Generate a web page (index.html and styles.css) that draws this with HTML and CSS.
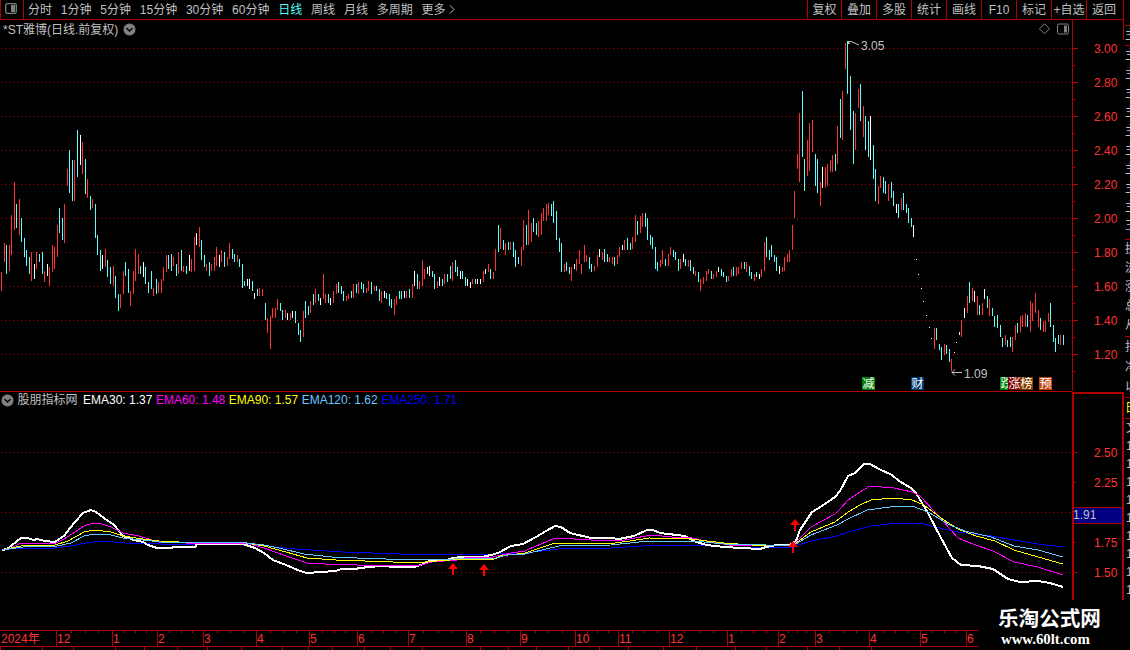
FILE: index.html
```html
<!DOCTYPE html>
<html lang="zh">
<head>
    <meta charset="UTF-8">
    <title>*ST雅博</title>
    <link rel="stylesheet" href="styles.css">
</head>
<body>
<div class="window">
    <div class="left">
        <div class="toolbar">
            <div class="tool-icon">
                <svg width="14" height="12"><rect x=".7" y=".7" width="10.600" height="9.600" rx="1.500" fill="none" stroke="#808080" stroke-width="1.300"/><rect x="6" y="2" width="4" height="7" fill="#808080"/></svg>
            </div>
            <div class="periods">
                <span>分时</span><span>1分钟</span><span>5分钟</span><span>15分钟</span><span>30分钟</span><span>60分钟</span><span class="active">日线</span><span>周线</span><span>月线</span><span>多周期</span><span>更多<svg class="more" width="8" height="11"><path d="M2 1.5L6 5.5L2 9.5" fill="none" stroke="#c0c0c0"/></svg></span>
            </div>
            <div class="actions">
                <span>复权</span><span>叠加</span><span>多股</span><span>统计</span><span>画线</span><span>F10</span><span>标记</span><span>+自选</span><span>返回</span>
            </div>
        </div>
        <div class="stock">
            <div class="stock-title">
                <span class="name">*ST雅博(日线.前复权)</span>
                <svg width="13" height="13"><circle cx="6.500" cy="6.500" r="6" fill="#808080"/><path d="M3.500 5L6.500 8L9.500 5" fill="none" stroke="#000" stroke-width="1.400"/></svg>
                <svg class="tools" width="30" height="12"><path d="M5.500 .8L10.500 5.800L5.500 10.800L.5 5.800Z" fill="none" stroke="#808080"/><rect x="18.500" y="1" width="11" height="10" rx="1.500" fill="none" stroke="#808080"/><rect x="25" y="2.500" width="3" height="7" fill="#808080"/></svg>
            </div>
        </div>
        <svg class="chart" id="price" width="1123" height="351" viewBox="0 40 1123 351">
            <g id="priceGrid"></g>
            <path id="up" class="red-bar"/>
            <path id="down" class="cyan-bar"/>
            <path id="flat" class="white-bar"/>
            <g class="note">
                <path d="M848 39.500h3M848.500 44v-3M848 41.500h3L859 45M848 43.500h2"/>
                <path d="M952 372.500h10M955 369.500l-3 3l3 3"/>
                <text x="861" y="50">3.05</text>
                <text x="964" y="378">1.09</text>
            </g>
            <g class="flags">
                <rect x="862" y="377" width="13" height="13" fill="#008000"/><text x="862.500" y="388">减</text>
                <rect x="911" y="377" width="13" height="13" fill="#003a70"/><text x="911.500" y="388">财</text>
                <rect x="1000" y="377" width="13" height="13" fill="#008000"/><text x="1000.500" y="388">跌</text>
                <rect x="1008" y="377" width="13" height="13" fill="#800000"/><text x="1008.500" y="388">涨</text>
                <rect x="1020" y="377" width="13" height="13" fill="#804000"/><text x="1020.500" y="388">榜</text>
                <rect x="1039" y="377" width="13" height="13" fill="#c04810"/><text x="1039.500" y="388">预</text>
            </g>
        </svg>
        <div class="indicator">
            <div class="legend">
                <svg width="13" height="13"><circle cx="6.500" cy="6.500" r="6" fill="#808080"/><path d="M3.500 5L6.500 8L9.500 5" fill="none" stroke="#000" stroke-width="1.400"/></svg>
                <span class="source">股朋指标网</span><span class="ema30">EMA30: 1.37</span><span class="ema60">EMA60: 1.48</span><span class="ema90">EMA90: 1.57</span><span class="ema120">EMA120: 1.62</span><span class="ema250">EMA250: 1.71</span>
            </div>
            <div class="legend-axis"></div>
        </div>
        <svg class="chart" id="ema" width="1124" height="192" viewBox="0 408 1124 192">
            <g id="emaGrid"></g>
            <polyline class="line250" points="2,550 21,548 55,548 71,546 86,543 102,541 125,543 161,544 246,544 264,546 296,549 343,552 400,554 496,554 525,553 559,549 611,548 642,546 690,545 728,547 792,547 811,541 837,536 848,532 871,526 897,523 920,523 935,527 958,532 991,536 1014,540 1038,544 1063,547"/>
            <polyline class="line30" points="2,550 7,549 12,545 21,538 27,538 34,540 37,539 45,541 55,542 59,539 64,536 70,528 75,522 83,513 91,510 96,512 104,518 114,525 123,536 134,540 143,542 148,545 157,548 170,548 175,547 195,547 197,544 243,544 255,548 264,553 273,560 286,565 300,571 307,573 321,572 336,571 341,569 354,569 368,567 382,566 396,567 414,567 421,565 429,561 446,560 453,558 462,557 482,557 495,554 500,552 511,546 523,544 536,537 546,531 555,526 561,527 570,533 591,538 611,538 619,539 634,536 647,530 653,530 660,533 685,536 696,542 707,545 724,547 760,549 766,547 777,545 790,545 796,541 800,530 812,512 822,506 835,497 840,491 848,476 855,473 864,464 870,464 879,469 892,475 899,481 911,488 916,493 928,513 941,538 952,558 961,565 978,566 993,569 1008,579 1020,582 1038,581 1050,583 1063,587"/>
            <polyline class="line60" points="2,550 11,548 21,543 54,544 64,539 75,532 84,526 93,523 102,524 111,527 123,533 139,536 159,542 186,543 246,543 264,548 286,556 307,563 325,564 357,565 411,565 421,565 432,562 457,560 464,558 493,557 511,553 525,551 536,546 546,542 555,538 574,539 591,540 625,540 651,535 672,537 687,537 706,541 728,545 792,546 811,527 835,514 841,508 848,500 860,492 870,486 894,488 912,492 920,496 935,512 958,538 973,544 993,551 1014,562 1038,567 1063,575"/>
            <polyline class="line90" points="2,550 21,546 55,545 68,541 84,532 95,530 111,532 123,536 143,539 159,541 179,542 241,542 264,546 286,552 307,558 336,560 393,562 425,562 450,560 495,559 500,556 525,553 546,546 555,543 589,543 615,543 630,541 649,538 690,539 724,543 751,545 792,546 811,532 835,522 848,512 860,505 871,500 894,498 912,500 924,505 941,518 958,529 976,536 995,541 1014,550 1038,557 1063,564"/>
            <polyline class="line120" points="2,550 23,547 57,546 71,543 84,536 95,534 107,534 123,538 143,540 161,542 214,542 246,543 264,545 279,548 304,554 332,557 357,558 386,559 411,560 454,559 496,558 507,555 525,554 546,549 559,546 611,545 649,541 694,541 724,544 766,545 794,545 811,535 837,525 848,519 867,510 890,507 912,506 928,512 950,525 965,531 991,537 1014,546 1038,550 1063,557"/>
            <g class="signals">
                <path d="M453 563l5 6h-4v6h-2v-6h-4z"/>
                <path d="M484 564l5 6h-4v6h-2v-6h-4z"/>
                <path d="M795 519l5 6h-4v6h-2v-6h-4z"/>
                <path d="M793 541l5 6h-4v6h-2v-6h-4z"/>
            </g>
            <rect class="tag" x="1073.500" y="507.500" width="49" height="16"/>
            <text class="tag-text" x="1073" y="519">1.91</text>
        </svg>
        <div class="bottom">
            <div class="dates">
                <div class="months" id="months"></div>
                <div class="next-row" id="nextRow"></div>
            </div>
            <div class="watermark">
                <div class="site">乐淘公式网</div>
                <div class="url">www.60lt.com</div>
            </div>
        </div>
    </div>
    <div class="side">
        <div class="side-head">主</div>
        <div class="side-names">主<br>主<br>主<br>主<br>主<br>主<br>主<br>主<br>主<br>玉</div>
        <div class="side-data">换<br>流<br>涨<br>总<br>从</div>
        <div class="side-more">扣<br>净<br>以</div>
        <div class="side-tab">日</div>
        <div class="side-time">文<br>1<br>1<br>1<br>1<br>1<br>1<br>1<br>1<br>1</div>
    </div>
</div>
<script src="chart.js"></script>
</body>
</html>
```
FILE: styles.css
```css
*{
    margin: 0;
    padding: 0;
    box-sizing: border-box;
}
body{
    width: 1130px;
    height: 650px;
    overflow: hidden;
    background: #000;
    color: #c0c0c0;
    font: 12px/18px "Liberation Sans", "Noto Sans CJK SC", sans-serif;
}
.window{
    display: flex;
    width: 1130px;
    height: 650px;
}
.left{
    width: 1124px;
    flex: none;
}
svg{
    display: block;
}
.toolbar{
    display: flex;
    height: 20px;
    border-bottom: 1px solid #b00000;
    line-height: 20px;
    white-space: nowrap;
}
.tool-icon{
    width: 24px;
    height: 20px;
    padding: 3px 0 0 4px;
    border-left: 1px solid #b00000;
    border-right: 1px solid #b00000;
}
.periods{
    display: flex;
    gap: 8.8px;
    padding-left: 4px;
}
.periods span{
    display: flex;
}
.periods .active{
    color: #54ffff;
}
.more{
    margin-top: 4px;
    margin-left: 2px;
}
.actions{
    display: flex;
    margin-left: auto;
}
.actions span{
    width: 35px;
    height: 19px;
    border-left: 1px solid #b00000;
    text-align: center;
}
.actions span:first-child{
    width: 34px;
}
.actions span:last-child{
    width: 38px;
    padding-right: 2px;
    border-right: 1px solid #b00000;
}
.stock{
    height: 20px;
    border-right: 1px solid #b00000;
}
.stock-title{
    display: flex;
    align-items: center;
    width: 1073px;
    height: 20px;
    padding: 0 3px 2px;
    border-right: 1px solid #b00000;
}
.name{
    width: 120px;
    padding-top: 1px;
    white-space: nowrap;
}
.tools{
    margin-left: auto;
}
.chart text{
    font-size: 12px;
}
.grid-line{
    stroke: #b00000;
    stroke-dasharray: 1 3;
}
.axis{
    stroke: #b00000;
    fill: none;
}
.axis-thick{
    stroke: #b00000;
    stroke-width: 2;
    fill: none;
}
.scale{
    fill: #ff3232;
}
.red-bar{
    stroke: #ff3232;
}
.cyan-bar{
    stroke: #54ffff;
}
.white-bar{
    stroke: #fff;
}
.note path{
    fill: none;
    stroke: #c0c0c0;
}
.note text{
    fill: #c0c0c0;
}
.flags text{
    fill: #fff;
}
.indicator{
    display: flex;
    height: 17px;
}
.legend{
    display: flex;
    align-items: center;
    gap: 3.5px;
    width: 1072px;
    padding-left: 1px;
    border-top: 1px solid #b00000;
    white-space: nowrap;
}
.source{
    width: 62px;
}
.legend-axis{
    width: 52px;
    margin-top: 1px;
    border: 2px solid #b00000;
    border-bottom: none;
}
.ema30{ color: #fff; }
.ema60{ color: #f0f; }
.ema90{ color: #ff0; }
.ema120{ color: #64c8ff; }
.ema250{ color: #00f; }
polyline{
    fill: none;
    shape-rendering: crispEdges;
}
.line30{
    stroke: #fff;
    stroke-width: 2;
}
.line60{ stroke: #f0f; }
.line90{ stroke: #ff0; }
.line120{ stroke: #64c8ff; }
.line250{ stroke: #00f; }
.signals{
    fill: #f00;
}
.tag{
    fill: #000080;
    stroke: #b00000;
}
.tag-text{
    fill: #c0c0c0;
}
.bottom{
    display: flex;
    height: 50px;
}
.dates{
    width: 978px;
    padding-top: 30px;
    overflow: hidden;
}
.months{
    display: flex;
    height: 17px;
    border-top: 1px solid #b00000;
    border-bottom: 1px solid #b00000;
    color: #ff3232;
    line-height: 16px;
}
.month{
    flex: none;
    display: grid;
    grid-template-columns: repeat(4, 1fr);
    border-left: 1px solid #b00000;
    white-space: nowrap;
}
.month:first-child{
    border-left: none;
    padding-left: 1px;
}
.month b{
    width: 0;
    font-weight: normal;
}
.month i{
    width: 1px;
    height: 2px;
    background: #b00000;
}
.next-row{
    display: flex;
    height: 3px;
}
.next-row div{
    flex: none;
    border-left: 1px solid #b00000;
}
.watermark{
    padding: 6px 0 0 20px;
    color: #fff;
    white-space: nowrap;
}
.site{
    font: bold 20.6px/23px "Noto Sans CJK SC", sans-serif;
}
.url{
    padding: 3px 0 0 3px;
    font: bold 14.8px/14px "Liberation Serif", serif;
}
.side{
    width: 6px;
    height: 600px;
    padding: 25px 0 0 1px;
    overflow: hidden;
}
.side div{
    width: 14px;
    border-top: 1px solid #b00000;
}
.side-head{
    height: 20px;
}
.side-names{
    height: 194px;
    line-height: 19px;
}
.side-data{
    height: 97px;
    line-height: 19px;
}
.side-more{
    height: 61px;
    line-height: 20px;
}
.side-tab{
    height: 21px;
    color: #ff0;
    line-height: 20px;
}
.side .side-time{
    padding-left: 1px;
}
```
FILE: chart.js
```js
// x, top, bottom of every daily bar
var bars = {
    up: "1 272 291,4 243 262,9 245 271,11 215 255,14 182 230,19 199 235,31 252 281,36 252 269,44 271 282,49 267 286,52 245 272,54 247 269,57 225 257,64 204 243,67 169 186,74 160 201,82 142 174,87 179 198,92 199 208,105 249 267,113 266 286,120 294 308,123 271 294,130 291 306,133 271 294,135 249 281,138 254 274,153 288 296,158 282 293,161 279 293,163 267 281,166 255 272,173 257 266,178 252 274,183 266 272,191 259 272,194 237 271,199 227 247,206 264 271,211 264 271,214 257 271,216 247 266,221 250 262,227 257 266,229 243 259,237 255 262,259 288 296,262 289 296,267 318 333,270 316 349,272 308 318,275 308 318,277 299 310,285 310 318,290 313 320,303 311 337,310 301 313,315 289 303,323 274 299,325 294 303,333 291 303,336 284 294,346 296 301,348 294 299,353 284 298,358 282 294,366 288 293,368 281 291,374 286 291,381 291 303,394 299 315,396 296 305,406 291 298,412 284 298,419 281 289,422 260 286,424 269 279,437 281 288,444 274 284,452 262 281,472 279 284,483 271 282,488 264 272,493 272 279,495 249 271,500 228 249,505 243 255,510 242 250,521 247 266,523 220 250,528 210 245,531 223 242,538 221 237,541 213 235,543 208 221,546 204 221,548 203 215,564 264 272,571 267 281,576 259 271,579 250 264,581 264 274,584 245 262,586 255 262,594 266 271,597 255 267,602 252 260,609 257 262,612 257 264,617 255 264,619 247 257,624 240 250,632 237 249,635 215 242,640 216 233,642 213 227,660 260 267,662 250 264,668 254 266,670 247 255,680 259 269,688 260 267,695 271 276,700 279 291,703 277 284,706 271 281,708 269 274,713 274 279,716 271 277,728 276 281,731 269 277,736 267 276,738 267 274,741 262 269,746 262 272,754 274 281,761 269 277,764 242 271,782 267 272,784 257 271,787 254 262,789 250 262,792 225 250,794 191 218,797 154 169,799 113 182,807 140 176,809 123 171,812 120 152,820 182 206,825 167 188,827 164 186,830 160 172,832 155 172,837 126 164,842 91 140,845 43 69,855 113 150,858 89 108,863 106 137,878 186 204,880 176 188,888 184 201,901 198 210,934 328 349,944 344 355,951 359 371,961 320 337,967 296 313,972 288 301,977 296 315,982 303 315,989 299 316,1005 335 345,1012 337 352,1015 325 340,1020 316 332,1022 315 327,1025 313 327,1030 301 332,1032 303 321,1035 293 313,1038 310 327,1043 321 332,1045 321 332,1048 313 322,1060 335 345",
    down: "6 245 274,16 204 228,21 218 242,24 238 257,26 250 266,29 257 274,39 254 262,42 252 274,59 208 233,62 218 240,69 150 193,72 160 201,77 130 177,85 159 194,90 196 210,95 204 238,97 235 255,100 250 271,107 260 277,110 267 284,115 276 298,118 294 311,125 262 276,128 269 293,140 266 274,145 267 284,148 282 293,151 271 289,156 279 294,168 255 269,171 254 271,176 264 276,181 250 271,186 266 274,201 240 260,204 255 267,209 262 276,224 252 267,232 249 259,234 254 262,239 259 267,242 264 288,244 281 286,252 281 291,257 289 296,265 303 320,280 303 311,282 310 320,295 311 323,298 323 335,300 330 342,305 301 318,308 306 315,313 294 305,318 294 301,328 294 303,338 282 293,341 286 294,343 291 301,351 291 298,356 284 293,361 282 289,363 284 293,371 282 294,376 286 291,379 289 301,386 293 299,389 294 306,391 299 308,399 291 299,401 291 299,409 289 298,417 274 289,432 271 277,434 274 289,442 279 286,447 274 282,450 266 279,455 260 272,457 267 276,462 271 279,465 277 286,475 279 284,490 269 279,498 225 252,503 240 250,508 242 250,513 242 257,515 250 267,518 257 264,526 225 245,533 218 232,536 223 235,551 204 216,553 201 223,556 211 240,559 238 252,561 243 272,566 262 271,569 267 274,589 257 269,591 264 272,604 249 262,607 254 262,614 257 266,627 238 250,630 243 250,637 221 235,645 213 227,647 218 240,650 235 245,652 237 249,655 247 269,657 262 271,665 259 266,673 250 257,675 252 260,678 259 271,685 259 266,690 260 271,693 267 274,698 272 282,711 271 279,721 269 276,723 272 277,726 276 282,733 267 276,744 262 269,749 266 276,751 272 279,756 272 277,766 237 257,769 250 260,771 245 257,774 255 262,776 257 271,802 91 157,804 159 191,815 154 186,817 159 193,835 154 171,840 99 138,847 41 94,850 76 130,853 111 164,860 84 121,865 116 150,868 121 157,873 145 179,875 169 201,883 177 193,885 181 194,891 182 198,893 191 206,898 204 218,903 193 210,906 204 213,908 208 223,911 218 227,936 328 340,939 344 350,941 347 360,946 345 354,949 349 362,969 282 303,979 305 315,987 296 308,992 308 316,994 316 327,997 315 328,1000 325 337,1002 338 347,1007 340 347,1010 337 347,1017 323 333,1027 315 327,1040 318 330,1050 303 327,1053 325 342,1055 338 352,1058 335 344,1063 335 345",
    flat: "34 264 279,47 264 276,80 135 165,102 255 269,143 262 277,189 255 271,196 233 245,219 255 267,247 279 286,249 279 289,254 293 299,287 313 320,292 311 318,320 298 305,330 298 305,384 291 298,404 291 298,414 271 286,427 267 274,429 266 276,439 277 286,460 271 279,467 279 286,470 282 288,477 279 284,480 279 284,485 269 274,574 264 269,599 249 257,622 245 250,683 254 262,718 267 272,759 274 279,779 266 274,822 167 188,870 116 160,896 204 213,913 225 237,916 259 260,918 274 275,921 288 289,923 301 302,926 315 316,929 327 328,931 338 339,954 352 353,956 342 343,959 332 335,964 308 318,974 291 302,984 289 299"
};
for (var kind in bars) {
    var d = bars[kind].split(",").map(function (bar) {
        var p = bar.split(" ");
        return "M" + p[0] + ".5 " + p[1] + "V" + p[2];
    }).join("");
    document.getElementById(kind).setAttribute("d", d);
}

function gridLine(y) {
    return '<path class="grid-line" d="M1 ' + y + '.5H1072"/>';
}

var html = '<path class="axis" d="M1072.5 40V391M1123.5 40V391"/>';
var i, y;
for (i = 0; i < 10; i++) {
    y = 48 + i * 34;
    html += gridLine(y);
    html += '<path class="axis" d="M1073 ' + y + '.5h5M1073 ' + (y + 17) + '.5h2"/>';
    html += '<text class="scale" x="1094" y="' + (y + 5) + '">' + (3 - i * 0.2).toFixed(2) + '</text>';
}
document.getElementById("priceGrid").innerHTML = html;

html = '<path class="axis-thick" d="M1073 408V600M1123 408V600"/>';
for (i = 0; i < 5; i++) {
    y = 452 + i * 30;
    if (i % 2 === 0) html += gridLine(y);
    html += '<path class="axis" d="M1074 ' + y + '.5h' + (i % 2 ? 2 : 4) + '"/>';
    if (i !== 2) html += '<text class="scale" x="1094" y="' + (y + 5) + '">' + (2.5 - i * 0.25).toFixed(2) + '</text>';
}
document.getElementById("emaGrid").innerHTML = html;

var names = ["2024年", 12, 1, 2, 3, 4, 5, 6, 7, 8, 9, 10, 11, 12, 1, 2, 3, 4, 5, 6];
var starts = [0, 56, 112, 157, 203, 256, 309, 357, 408, 466, 520, 575, 618, 669, 727, 778, 815, 869, 920, 966, 1014];
html = "";
for (i = 0; i < names.length; i++) {
    html += '<div class="month" style="width:' + (starts[i + 1] - starts[i]) + 'px"><b>' + names[i] + '</b>' + (i ? '<i></i><i></i><i></i>' : '') + '</div>';
}
document.getElementById("months").innerHTML = html;

var cuts = [0, 42, 73, 115, 144, 177, 207, 241, 282, 308, 332, 364, 390, 422, 480, 508, 536, 568, 599, 628, 663, 696, 735, 766, 807, 839, 871, 978];
html = "";
for (i = 0; i < cuts.length - 1; i++) {
    html += '<div style="width:' + (cuts[i + 1] - cuts[i]) + 'px"></div>';
}
document.getElementById("nextRow").innerHTML = html;
```
